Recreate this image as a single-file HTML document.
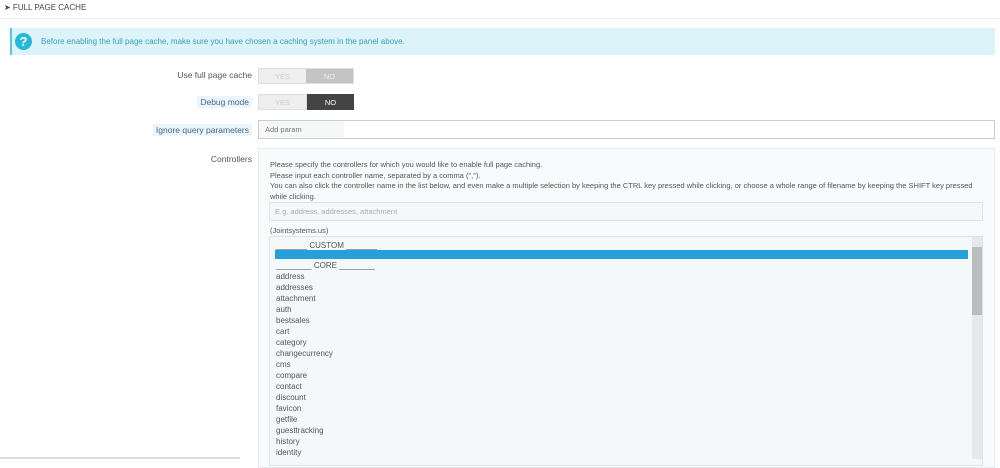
<!DOCTYPE html>
<html><head><meta charset="utf-8"><style>
*{margin:0;padding:0;box-sizing:border-box}
body{width:1000px;height:459px;overflow:hidden;background:#fff;font-family:"Liberation Sans",sans-serif;font-size:8px;color:#555;position:relative}
.a{position:absolute}
.lbl{position:absolute;right:748px;font-size:8.5px;color:#555;text-align:right;white-space:nowrap}
.hl{background:#eaf6fb;padding:1px 3px;color:#4a6a80}
.sw{position:absolute;left:258px;width:96px;height:16px;display:flex;font-size:7.5px}
.sw div{flex:1;display:flex;align-items:center;justify-content:center}
.it{position:absolute;left:276px;font-size:8px;color:#555;line-height:11px}
</style></head><body>
<div class="a" style="left:4px;top:3px;font-size:8px;color:#444;">&#10148; FULL PAGE CACHE</div>
<div class="a" style="left:0;top:18px;width:1000px;height:1px;background:#eee"></div>
<div class="a" style="left:10px;top:28px;width:985px;height:27px;background:#dcf3f9;border-left:2px solid #5bc6df"></div>
<div class="a" style="left:15px;top:33px;width:17px;height:17px;border-radius:50%;background:#25b9d7;color:#fff;font-weight:bold;font-size:13px;text-align:center;line-height:17px">?</div>
<div class="a" style="left:41px;top:37px;font-size:8px;color:#3a9fbe">Before enabling the full page cache, make sure you have chosen a caching system in the panel above.</div>
<div class="lbl" style="top:70px">Use full page cache</div>
<div class="sw" style="top:68px;border:1px solid #ddd"><div style="background:#eee;color:#ccc">YES</div><div style="background:#c4c4c4;color:#eee">NO</div></div>
<div class="lbl" style="top:97px"><span class="hl">Debug mode</span></div>
<div class="sw" style="top:94px"><div style="background:#eee;color:#ccc;border:1px solid #ddd">YES</div><div style="background:#444;color:#fff">NO</div></div>
<div class="lbl" style="top:125px"><span class="hl">Ignore query parameters</span></div>
<div class="a" style="left:258px;top:120px;width:737px;height:19px;border:1px solid #ccc;background:#fff"></div>
<div class="a" style="left:259px;top:121px;width:85px;height:17px;background:#f5f8f9"></div>
<div class="a" style="left:265px;top:125px;font-size:7.5px;color:#777">Add param</div>
<div class="lbl" style="top:154px">Controllers</div>
<div class="a" style="left:258px;top:148px;width:737px;height:320px;border:1px solid #e5ecf0;background:#f8fafb"></div>
<div class="a" style="left:270px;top:160px;font-size:7.5px;line-height:10.5px;color:#555;width:720px">Please specify the controllers for which you would like to enable full page caching.<br>Please input each controller name, separated by a comma (",").<br>You can also click the controller name in the list below, and even make a multiple selection by keeping the CTRL key pressed while clicking, or choose a whole range of filename by keeping the SHIFT key pressed while clicking.</div>
<div class="a" style="left:269px;top:202px;width:714px;height:19px;border:1px solid #dde3e6;background:#f5f8f9"></div>
<div class="a" style="left:275px;top:207px;font-size:7.5px;color:#aaa">E.g. address, addresses, attachment</div>
<div class="a" style="left:270px;top:226px;font-size:7.5px">(Jointsystems.us)</div>
<div class="a" style="left:269px;top:236px;width:714px;height:230px;border:1px solid #dde3e6;background:#f5f8f9"></div>
<div class="a" style="left:972px;top:237px;width:10px;height:222px;background:#e8e8e8"></div>
<div class="a" style="left:972px;top:247px;width:10px;height:68px;background:#bcbcbc"></div>
<div class="a" style="left:275px;top:250px;width:693px;height:9px;background:#25a0da"></div>
<div class="it" style="top:240px">_______ CUSTOM _______</div>
<div class="it" style="top:260px">________ CORE ________</div>
<div class="it" style="top:271px">address<br>addresses<br>attachment<br>auth<br>bestsales<br>cart<br>category<br>changecurrency<br>cms<br>compare<br>contact<br>discount<br>favicon<br>getfile<br>guesttracking<br>history<br>identity</div>
<div class="a" style="left:0;top:457px;width:240px;height:2px;background:#ddd"></div>
</body></html>
